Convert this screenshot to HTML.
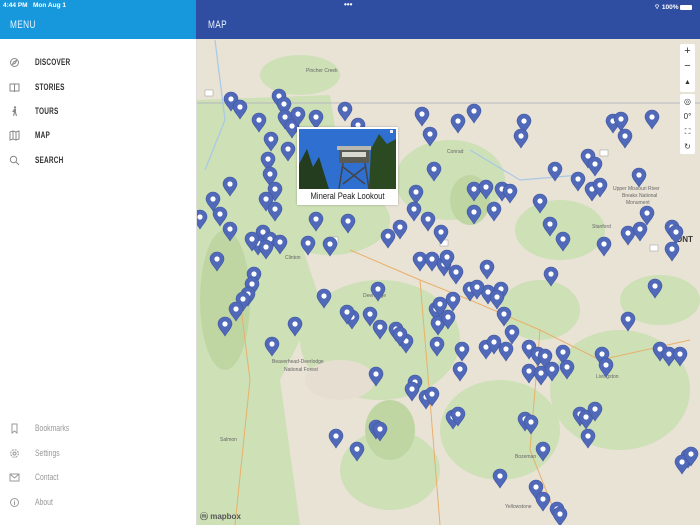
<!DOCTYPE html>
<html><head><meta charset="utf-8"><style>
*{margin:0;padding:0;box-sizing:border-box}
body{width:700px;height:525px;overflow:hidden;position:relative;font-family:"Liberation Sans",sans-serif;background:#fff}
#side{position:absolute;left:0;top:0;width:196px;height:525px;background:#fff}
#lh{position:absolute;left:0;top:0;width:196px;height:39px;background:#1798dd}
#rh{position:absolute;left:196px;top:0;width:504px;height:39px;background:#2f4ea1}
.st{position:absolute;top:2px;color:#fff;font-size:6.5px;font-weight:bold}
.ht{position:absolute;top:19px;color:#eaf4ff;font-size:11px;letter-spacing:0.5px;transform:scaleX(.75);transform-origin:left}
.mi{position:absolute;left:35px;font-size:9.5px;font-weight:bold;color:#333;transform:scaleX(.68);transform-origin:left;letter-spacing:.3px}
.bi{position:absolute;left:35px;font-size:9.5px;color:#999;transform:scaleX(.72);transform-origin:left}
.ic{position:absolute;left:9px;width:11px;height:11px}
#map{position:absolute;left:196px;top:39px;width:504px;height:486px;overflow:hidden;background:#e9e3d6}
#pop{position:absolute;left:297px;top:127px;width:101px;height:78px;background:#fff;box-shadow:0 0 2px rgba(0,0,0,.3)}
</style></head><body>
<div id="map">
<svg width="504" height="486" viewBox="196 39 504 486" style="position:absolute;left:0;top:0">
<g fill="#cde0b6">
<path d="M196 100 L330 95 L340 160 L300 240 L320 300 L280 380 L300 525 L196 525Z"/>
<ellipse cx="380" cy="340" rx="80" ry="60"/>
<ellipse cx="330" cy="220" rx="60" ry="35"/>
<ellipse cx="450" cy="180" rx="55" ry="40"/>
<ellipse cx="560" cy="230" rx="45" ry="30"/>
<ellipse cx="620" cy="390" rx="70" ry="60"/>
<ellipse cx="500" cy="430" rx="60" ry="50"/>
<ellipse cx="390" cy="470" rx="50" ry="40"/>
<ellipse cx="540" cy="310" rx="40" ry="30"/>
<ellipse cx="300" cy="75" rx="40" ry="20"/>
<ellipse cx="660" cy="300" rx="40" ry="25"/>
</g>
<g fill="#bfd6a3"><ellipse cx="225" cy="300" rx="25" ry="70"/><ellipse cx="390" cy="430" rx="25" ry="30"/><ellipse cx="470" cy="200" rx="20" ry="25"/></g>
<ellipse cx="340" cy="380" rx="35" ry="20" fill="#e6dfd1"/>
<path d="M196 103 H700" stroke="#b8b8c0" stroke-width="1"/>
<g fill="none" stroke="#e9b06a" stroke-width="1"><path d="M350 250 L420 280 L470 300 L540 330 L600 360 L690 340"/><path d="M420 280 L430 400 L440 525"/><path d="M240 300 L250 380 L235 525"/><path d="M540 330 L530 450 L560 525"/></g>
<g fill="none" stroke="#a8c8e8" stroke-width="1.2"><path d="M215 40 L225 120 L205 170"/><path d="M470 150 L520 180 L580 175"/></g>
<g fill="#fff" stroke="#999" stroke-width=".5"><rect x="205" y="90" width="8" height="6"/><rect x="440" y="240" width="8" height="6"/><rect x="330" y="237" width="8" height="6"/><rect x="600" y="150" width="8" height="6"/><rect x="650" y="245" width="8" height="6"/></g>
<g font-size="5" fill="#666" font-family="Liberation Sans,sans-serif"><text x="306" y="72">Pincher Creek</text><text x="447" y="153">Conrad</text><text x="613" y="190">Upper Missouri River</text><text x="622" y="197">Breaks National</text><text x="626" y="204">Monument</text><text x="272" y="363">Beaverhead-Deerlodge</text><text x="284" y="371">National Forest</text><text x="220" y="441">Salmon</text><text x="285" y="259">Clinton</text><text x="363" y="297">Deerlodge</text><text x="592" y="228">Stanford</text><text x="515" y="458">Bozeman</text><text x="596" y="378">Livingston</text><text x="505" y="508">Yellowstone</text></g>
<text x="676" y="242" font-size="8" font-weight="bold" fill="#333" font-family="Liberation Sans,sans-serif">ONT</text>
<g id="pins"></g>
<text x="200" y="519" font-size="8" fill="#555" font-family="Liberation Sans,sans-serif" font-weight="bold">ⓜ mapbox</text>
</svg>
</div>
<div id="pop">
<svg width="97" height="60" style="position:absolute;left:2px;top:2px"><rect width="97" height="60" fill="#2e6fcf"/><path d="M0 60 L0 35 L8 20 L14 38 L20 28 L30 60Z" fill="#243d1f"/><path d="M70 60 L72 20 L80 5 L88 15 L97 10 L97 60Z" fill="#2c4a22"/><rect x="40" y="20" width="30" height="14" fill="#5a5a55"/><rect x="38" y="17" width="34" height="4" fill="#b8b8b0"/><rect x="43" y="23" width="24" height="5" fill="#d8d8d0"/><path d="M44 34 L40 60 M66 34 L70 60 M44 38 L66 55 M66 38 L44 55" stroke="#444" stroke-width="1.5"/></svg>
<div style="position:absolute;left:0;top:64px;width:101px;text-align:center;font-size:9px;color:#222;transform:scaleX(.85)">Mineral Peak Lookout</div>
<div style="position:absolute;left:93px;top:3px;width:3px;height:3px;background:#eee"></div>
</div>
<div style="position:absolute;left:680px;top:44px;width:15px;height:48px;background:#fff;border-radius:2px;font-size:11px;color:#333;text-align:center;line-height:15px">+<br>−<br><span style="font-size:7px">▲</span></div>
<div style="position:absolute;left:680px;top:94px;width:15px;height:60px;background:#fff;border-radius:2px;font-size:8px;color:#333;text-align:center;line-height:15px">◎<br>0°<br>⛶<br>↻</div>
<div id="side">
<div style="position:absolute;left:196px;top:0;width:1px;height:525px;background:#ddd"></div>
<div class="mi" style="top:57px">DISCOVER</div>
<div class="mi" style="top:82px">STORIES</div>
<div class="mi" style="top:106px">TOURS</div>
<div class="mi" style="top:130px">MAP</div>
<div class="mi" style="top:155px">SEARCH</div>
<svg class="ic" style="top:57px" viewBox="0 0 11 11" fill="none" stroke="#888"><circle cx="5.5" cy="5.5" r="4"/><path d="M7.5 3.5 L4.5 5 L3.5 7.5 L6.5 6Z"/></svg>
<svg class="ic" style="top:82px" viewBox="0 0 11 11" fill="none" stroke="#888"><path d="M1 2 H5 L5.5 3 L6 2 H10 V9 H6 L5.5 9.5 L5 9 H1Z M5.5 3 V9"/></svg>
<svg class="ic" style="top:106px" viewBox="0 0 11 11" fill="#888"><circle cx="6" cy="1.5" r="1.2"/><path d="M5 3 L7 3 L7 6 L8 10 L7 10 L6 7 L5 10 L4 10 L5 6 L3 6Z"/></svg>
<svg class="ic" style="top:130px" viewBox="0 0 11 11" fill="none" stroke="#888"><path d="M1 2 L4 1 L7 2 L10 1 V9 L7 10 L4 9 L1 10Z M4 1 V9 M7 2 V10"/></svg>
<svg class="ic" style="top:155px" viewBox="0 0 11 11" fill="none" stroke="#888"><circle cx="4.5" cy="4.5" r="3.2"/><path d="M7 7 L10 10"/></svg>
<div class="bi" style="top:423px">Bookmarks</div>
<div class="bi" style="top:448px">Settings</div>
<div class="bi" style="top:472px">Contact</div>
<div class="bi" style="top:497px">About</div>
<svg class="ic" style="top:423px" viewBox="0 0 11 11" fill="none" stroke="#999"><path d="M3 1 H8 V10 L5.5 8 L3 10Z"/></svg>
<svg class="ic" style="top:448px" viewBox="0 0 11 11" fill="none" stroke="#999"><circle cx="5.5" cy="5.5" r="3.8" stroke-dasharray="2 1"/><circle cx="5.5" cy="5.5" r="1.5"/></svg>
<svg class="ic" style="top:472px" viewBox="0 0 11 11" fill="none" stroke="#999"><rect x="1" y="2" width="9" height="7"/><path d="M1 2 L5.5 6 L10 2"/></svg>
<svg class="ic" style="top:497px" viewBox="0 0 11 11" fill="none" stroke="#999"><circle cx="5.5" cy="5.5" r="4"/><path d="M5.5 4.5 V8 M5.5 3 V3.5"/></svg>
</div>
<div id="lh"><div class="st" style="left:3px">4:44 PM&nbsp;&nbsp; Mon Aug 1</div><div class="ht" style="left:10px">MENU</div></div>
<div id="rh"><div class="st" style="left:148px;font-size:8px;top:0">•••</div><div class="st" style="left:458px">⌔ 100% <span style="display:inline-block;width:12px;height:5px;background:#fff;border-radius:1px;vertical-align:middle"></span></div><div class="ht" style="left:12px">MAP</div></div>
<script>
var P=[[231,100],[240,108],[279,97],[284,105],[259,121],[271,140],[285,118],[292,127],[298,115],[288,150],[268,160],[270,175],[275,190],[266,200],[275,210],[263,233],[270,240],[258,244],[252,240],[280,243],[266,248],[230,185],[213,200],[200,218],[220,215],[230,230],[217,260],[254,275],[252,285],[248,295],[243,300],[236,310],[225,325],[272,345],[295,325],[324,297],[345,110],[358,126],[310,135],[316,118],[422,115],[430,135],[458,122],[474,112],[524,122],[521,137],[613,122],[621,120],[625,137],[652,118],[434,170],[416,193],[414,210],[428,220],[441,233],[474,190],[486,188],[502,190],[510,192],[474,213],[494,210],[540,202],[555,170],[578,180],[588,157],[595,165],[592,190],[600,186],[639,176],[647,214],[628,234],[640,230],[672,228],[676,233],[550,225],[563,240],[604,245],[420,260],[432,260],[444,265],[447,258],[456,273],[487,268],[470,290],[488,293],[501,290],[497,298],[504,315],[512,333],[477,288],[551,275],[316,220],[348,222],[330,245],[308,244],[388,237],[400,228],[378,290],[352,318],[347,313],[370,315],[380,328],[396,330],[406,342],[400,335],[436,310],[440,305],[453,300],[438,324],[448,318],[437,345],[462,350],[486,348],[494,343],[506,350],[529,348],[538,355],[545,357],[563,353],[567,368],[529,372],[541,374],[552,370],[602,355],[606,366],[628,320],[655,287],[660,350],[669,355],[680,355],[460,370],[415,383],[412,390],[426,398],[432,395],[376,375],[453,418],[458,415],[525,420],[531,423],[580,415],[586,418],[595,410],[588,437],[543,450],[376,428],[380,430],[336,437],[357,450],[500,477],[536,488],[543,500],[557,510],[560,515],[688,457],[682,463],[691,455],[672,250]];
var g=document.getElementById('pins'),s='';
P.forEach(function(p){var x=p[0],y=p[1];if(x>296&&x<399&&y>126&&y<206)return;s+='<g transform="translate('+x+','+(y+11)+')"><path d="M0 0C-3-5-7-8-7-12A7 7 0 1 1 7-12C7-8 3-5 0 0Z" fill="#5169b9" stroke="#3f559e" stroke-width=".6"/><circle cx="0" cy="-12" r="2.6" fill="#fff"/></g>';});
g.innerHTML=s;
</script>
</body></html>
